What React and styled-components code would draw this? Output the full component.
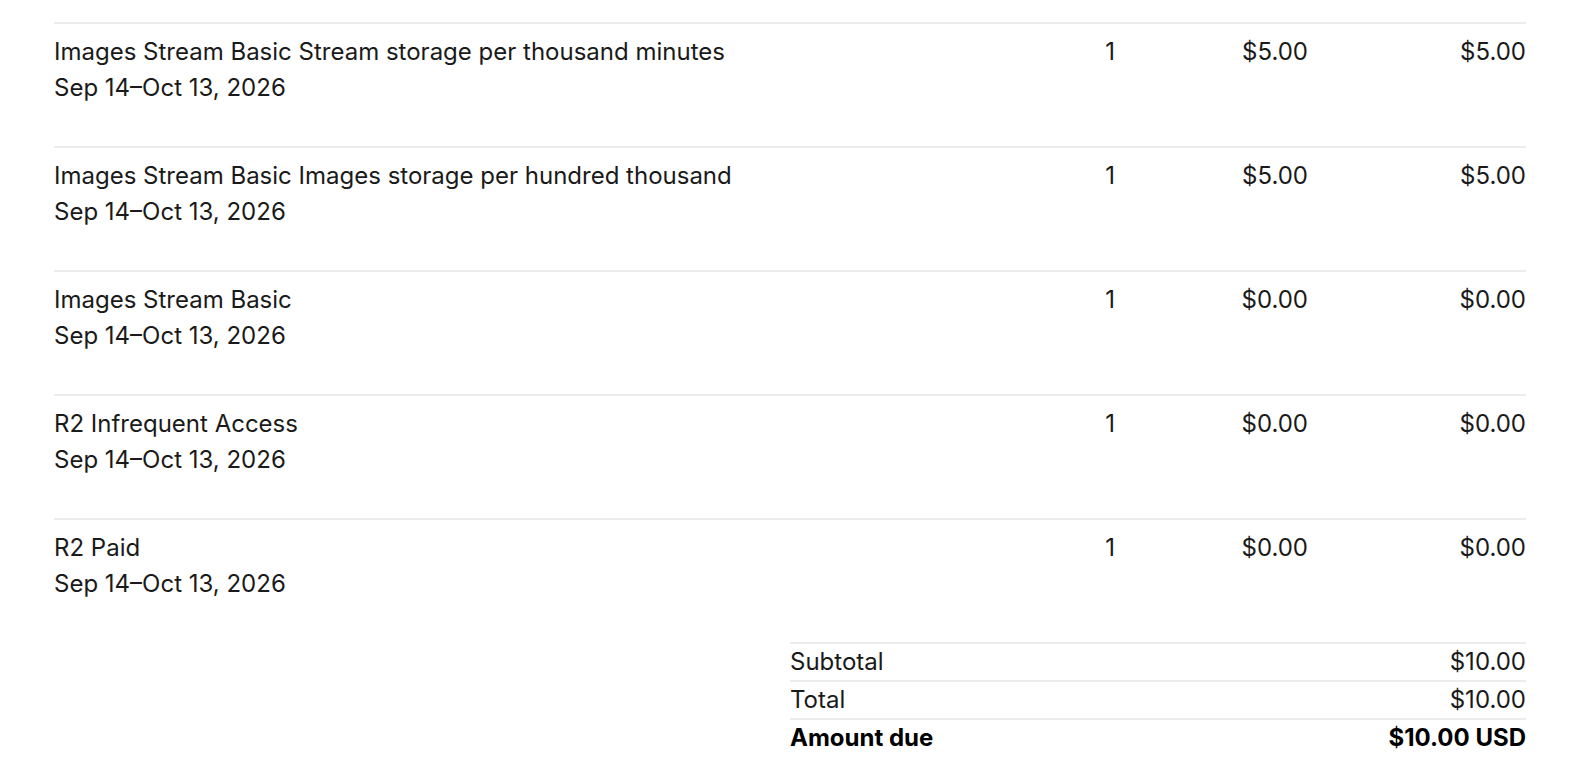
import React from "react";
import styled, { createGlobalStyle } from "styled-components";

const Global = createGlobalStyle`
  html, body { margin: 0; padding: 0; background: #ffffff; }
  body {
    font-family: Inter, "Noto Sans", "Liberation Sans", sans-serif;
    color: #1a1a1a;
    -webkit-font-smoothing: antialiased;
  }
`;

const Page = styled.div`
  padding: 22px 60px 0 54px;
`;

const ItemRow = styled.div`
  display: grid;
  grid-template-columns: 1fr 100px 193px 218px;
  border-top: 2px solid #ececec;
  padding: 10px 0 40px;
  font-size: 24px;
  line-height: 36px;
`;

const Desc = styled.div`
  display: flex;
  flex-direction: column;
`;

const Cell = styled.div`
  text-align: right;
`;

const Totals = styled.div`
  margin-left: 50%;
  display: flex;
  flex-direction: column;
`;

const TotalRow = styled.div`
  display: flex;
  justify-content: space-between;
  border-top: 2px solid #ececec;
  font-size: 24px;
  line-height: 36px;
  font-weight: ${(p) => (p.$bold ? 700 : 400)};
  color: ${(p) => (p.$bold ? "#000" : "#1a1a1a")};
`;

const items = [
  { name: "Images Stream Basic Stream storage per thousand minutes", qty: 1, unit: "$5.00", amount: "$5.00" },
  { name: "Images Stream Basic Images storage per hundred thousand", qty: 1, unit: "$5.00", amount: "$5.00" },
  { name: "Images Stream Basic", qty: 1, unit: "$0.00", amount: "$0.00" },
  { name: "R2 Infrequent Access", qty: 1, unit: "$0.00", amount: "$0.00" },
  { name: "R2 Paid", qty: 1, unit: "$0.00", amount: "$0.00" },
];

export default function App() {
  return (
    <>
      <Global />
      <Page>
        {items.map((it) => (
          <ItemRow key={it.name}>
            <Desc>
              <span>{it.name}</span>
              <span>Sep 14–Oct 13, 2026</span>
            </Desc>
            <Cell>{it.qty}</Cell>
            <Cell>{it.unit}</Cell>
            <Cell>{it.amount}</Cell>
          </ItemRow>
        ))}
        <Totals>
          <TotalRow>
            <span>Subtotal</span>
            <span>$10.00</span>
          </TotalRow>
          <TotalRow>
            <span>Total</span>
            <span>$10.00</span>
          </TotalRow>
          <TotalRow $bold>
            <span>Amount due</span>
            <span>$10.00 USD</span>
          </TotalRow>
        </Totals>
      </Page>
    </>
  );
}
